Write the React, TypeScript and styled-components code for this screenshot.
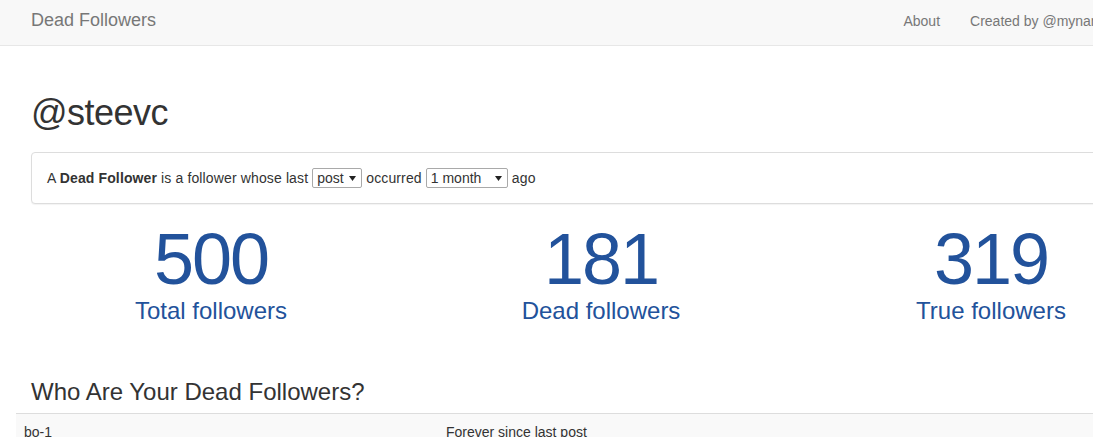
import React from "react";
import styled, { createGlobalStyle } from "styled-components";

const GlobalStyle = createGlobalStyle`
  html, body {
    margin: 0;
    padding: 0;
    overflow: hidden;
    background: #fff;
  }
  body {
    font-family: "Liberation Sans", Arial, Helvetica, sans-serif;
    font-size: 14px;
    line-height: 1.42857;
    color: #333;
  }
  * {
    box-sizing: border-box;
  }
`;

const Page = styled.div`
  width: 1202px;
`;

const Navbar = styled.nav`
  height: 46px;
  background-color: #f8f8f8;
  border-bottom: 1px solid #e7e7e7;
`;

const NavContainer = styled.div`
  width: 1170px;
  margin: 0 auto;
  padding: 0 15px;
  display: flex;
`;

const Brand = styled.a`
  margin-left: -15px;
  padding: 10px 15px;
  font-size: 18px;
  line-height: 20px;
  color: #777;
  text-decoration: none;
`;

const NavList = styled.ul`
  display: flex;
  margin: 0 -15px 0 auto;
  padding: 0;
  list-style: none;
`;

const NavLink = styled.a`
  display: block;
  padding: 11px 15px;
  line-height: 20px;
  color: #777;
  text-decoration: none;
  white-space: nowrap;
`;

const Container = styled.main`
  width: 1170px;
  margin: 0 auto;
  padding: 0 15px;
`;

const Title = styled.h1`
  margin: 47px 0 0;
  font-size: 36px;
  font-weight: 500;
  line-height: 39px;
  letter-spacing: -0.5px;
`;

const Panel = styled.div`
  margin-top: 20px;
  padding: 15px;
  line-height: 20px;
  letter-spacing: 0.13px;
  background: #fff;
  border: 1px solid #ddd;
  border-radius: 4px;
  box-shadow: 0 1px 1px rgba(0, 0, 0, 0.05);
  white-space: nowrap;
`;

const SelectBox = styled.span<{ $width: number }>`
  display: inline-flex;
  align-items: center;
  vertical-align: top;
  width: ${(p) => p.$width}px;
  height: 20px;
  padding: 0 5px 0 4px;
  border: 1px solid #a9a9a9;
  border-radius: 2px;
  background: #fff;
  letter-spacing: 0;
`;

const Select = styled.select`
  flex: 1;
  min-width: 0;
  appearance: none;
  -webkit-appearance: none;
  border: none;
  background: transparent;
  padding: 0;
  margin: 0;
  font: inherit;
  font-size: 14px;
  line-height: 18px;
  color: #333;
  outline: none;
`;

const Arrow = styled.svg`
  flex: none;
  width: 7px;
  height: 5px;
  fill: #222;
`;

const StatsRow = styled.div`
  display: grid;
  grid-template-columns: repeat(3, 390px);
  margin: 16px -15px 0;
`;

const Stat = styled.div`
  padding: 0 15px;
  text-align: center;
  color: #22529b;
`;

const StatNumber = styled.div`
  font-size: 72px;
  line-height: 79px;
  letter-spacing: -2px;
`;

const StatLabel = styled.div`
  margin-top: -1px;
  font-size: 24px;
  line-height: 26px;
`;

const SectionTitle = styled.h3`
  margin: 55px 0 8px;
  font-size: 24px;
  font-weight: 500;
  line-height: 26px;
`;

const Table = styled.div`
  margin: 0 -15px;
  border-top: 1px solid #ddd;
`;

const TableRow = styled.div<{ $striped?: boolean }>`
  display: grid;
  grid-template-columns: 422px 1fr;
  background: ${(p) => (p.$striped ? "#f9f9f9" : "#fff")};
`;

const Cell = styled.div`
  padding: 8px;
  line-height: 20px;
`;

function Dropdown({ width, options }: { width: number; options: string[] }) {
  return (
    <SelectBox $width={width}>
      <Select defaultValue={options[0]}>
        {options.map((o) => (
          <option key={o}>{o}</option>
        ))}
      </Select>
      <Arrow viewBox="0 0 7 5">
        <path d="M0 0h7L3.5 5z" />
      </Arrow>
    </SelectBox>
  );
}

const stats = [
  { value: 500, label: "Total followers" },
  { value: 181, label: "Dead followers" },
  { value: 319, label: "True followers" },
];

const rows = [
  { name: "bo-1", since: "Forever since last post" },
  { name: "cryptoboy", since: "Forever since last post" },
];

export default function App() {
  return (
    <Page>
      <GlobalStyle />
      <Navbar>
        <NavContainer>
          <Brand href="#">Dead Followers</Brand>
          <NavList>
            <li>
              <NavLink href="#">About</NavLink>
            </li>
            <li>
              <NavLink href="#">Created by @mynameis-thomas</NavLink>
            </li>
          </NavList>
        </NavContainer>
      </Navbar>

      <Container>
        <Title>@steevc</Title>

        <Panel>
          A <strong>Dead Follower</strong> is a follower whose last{" "}
          <Dropdown width={50} options={["post", "vote"]} /> occurred{" "}
          <Dropdown width={82} options={["1 month", "3 months", "6 months", "12 months"]} /> ago
        </Panel>

        <StatsRow>
          {stats.map((s) => (
            <Stat key={s.label}>
              <StatNumber>{s.value}</StatNumber>
              <StatLabel>{s.label}</StatLabel>
            </Stat>
          ))}
        </StatsRow>

        <SectionTitle>Who Are Your Dead Followers?</SectionTitle>
        <Table>
          {rows.map((r, i) => (
            <TableRow key={r.name} $striped={i % 2 === 0}>
              <Cell>{r.name}</Cell>
              <Cell>{r.since}</Cell>
            </TableRow>
          ))}
        </Table>
      </Container>
    </Page>
  );
}
